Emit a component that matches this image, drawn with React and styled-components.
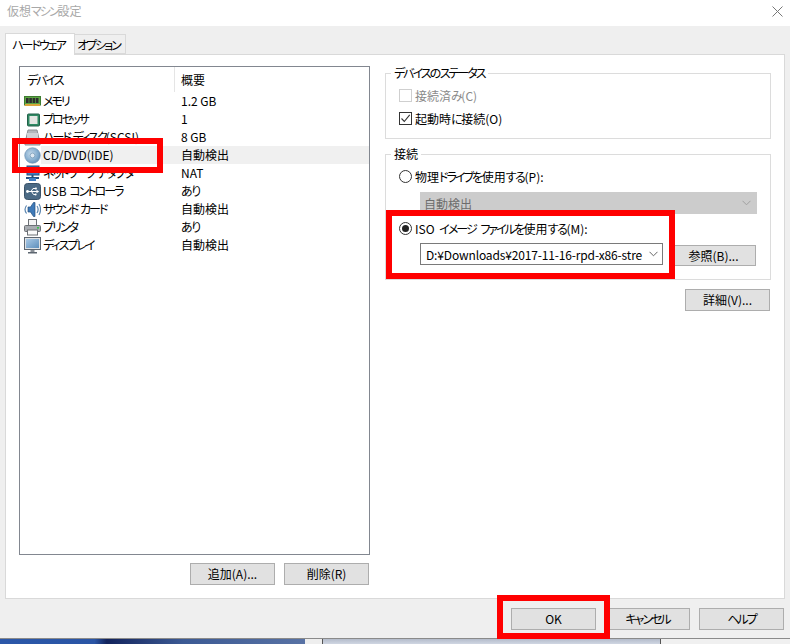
import React from "react";
import styled, { createGlobalStyle } from "styled-components";

const Global = createGlobalStyle`
  html, body { margin: 0; padding: 0; background: #efefef; }
  body {
    font-family: "Noto Sans CJK JP", "Noto Sans", sans-serif;
    font-size: 12px;
    color: #000;
    font-feature-settings: "palt";
  }
  * { box-sizing: border-box; }
`;

const Page = styled.div`
  position: relative;
  width: 790px;
  height: 644px;
  overflow: hidden;
  display: flex;
  flex-direction: column;
  background: #efefef;
`;
const Katakana = styled.span`
  letter-spacing: -2px;
`;
const Hiragana = styled.span`
  letter-spacing: -1.4px;
`;
const Jp = ({ children }) =>
  children.split(/([\u30A0-\u30FF]+|[\u3040-\u309F]+)/).map((part, i) => {
    if (/^[\u30A0-\u30FF]+$/.test(part)) return <Katakana key={i}>{part}</Katakana>;
    if (/^[\u3040-\u309F]+$/.test(part)) return <Hiragana key={i}>{part}</Hiragana>;
    return part;
  });

const TitleBar = styled.header`
  height: 26px;
  flex: none;
  background: #fff;
  display: flex;
  align-items: center;
  justify-content: space-between;
  padding: 0 7px 4px 7px;
  color: #a8a8a8;
  line-height: 20px;
`;
const CloseGlyph = styled.svg`
  width: 11px;
  height: 11px;
  margin-top: 1px;
`;
const TabStrip = styled.nav`
  height: 28px;
  flex: none;
  padding: 7px 0 0 5px;
  display: flex;
  align-items: flex-end;
  position: relative;
  z-index: 1;
`;
const Tab = styled.div`
  display: flex;
  align-items: center;
  justify-content: center;
  white-space: nowrap;
  padding-right: 3px;
  border: 1px solid #d9d9d9;
  background: ${(p) => (p.$active ? "#fff" : "#efefef")};
  width: ${(p) => (p.$active ? "70px" : "51px")};
  height: ${(p) => (p.$active ? "22px" : "20px")};
  margin-bottom: ${(p) => (p.$active ? "-1px" : "0")};
  border-bottom: ${(p) => (p.$active ? "none" : "1px solid #d9d9d9")};
  border-left: ${(p) => (p.$active ? "1px solid #d9d9d9" : "none")};
`;
const Panel = styled.main`
  margin: 0 5px;
  height: 545px;
  flex: none;
  background: #fff;
  border: 1px solid #d9d9d9;
  padding: 11px 13px 0 13px;
  display: flex;
  gap: 15px;
`;
const LeftColumn = styled.section`
  width: 351px;
  flex: none;
  display: flex;
  flex-direction: column;
`;
const ListBox = styled.div`
  height: 489px;
  border: 1px solid #828790;
  background: #fff;
`;
const ListHeader = styled.div`
  height: 25px;
  display: flex;
  line-height: 26px;
`;
const HeaderCell = styled.div`
  padding-left: ${(p) => p.$pad}px;
  width: ${(p) => (p.$w ? `${p.$w}px` : "auto")};
  border-right: ${(p) => (p.$w ? "1px solid #e5e5e5" : "none")};
`;
const Row = styled.div`
  height: 18px;
  display: flex;
  align-items: center;
  padding-left: 4px;
  line-height: 18px;
`;
const RowIcon = styled.svg`
  width: 17px;
  height: 17px;
  flex: none;
`;
const RowBody = styled.div`
  flex: 1;
  height: 18px;
  display: flex;
  background: ${(p) => (p.$selected ? "#f0f0f0" : "transparent")};
`;
const RowName = styled.div`
  width: 134px;
  padding-left: 2px;
  white-space: nowrap;
`;
const RowSummary = styled.div`
  padding-left: 6px;
`;
const ActionsRow = styled.div`
  display: flex;
  justify-content: flex-end;
  gap: 9px;
  margin-top: 8px;
  padding-right: 1px;
`;
const Button = styled.button`
  width: 85px;
  height: 22px;
  padding: 0;
  border: 1px solid #adadad;
  background: #e1e1e1;
  font: inherit;
  font-feature-settings: inherit;
  color: #000;
  line-height: 18px;
  flex: none;
`;
const RightColumn = styled.section`
  width: 386px;
  flex: none;
  display: flex;
  flex-direction: column;
`;
const Group = styled.fieldset`
  margin: 0 0 ${(p) => p.$after}px 0;
  padding: ${(p) => p.$top}px 0 0 13px;
  height: ${(p) => p.$h}px;
  border: 1px solid #dcdcdc;
  min-width: 0;
`;
const Legend = styled.legend`
  padding: 0 3px;
  margin-left: -8px;
  line-height: 14px;
  height: 14px;
`;
const CheckRow = styled.label`
  height: 23px;
  display: flex;
  align-items: center;
  gap: 3px;
  color: ${(p) => (p.$disabled ? "#8a8a8a" : "#000")};
`;
const CheckBox = styled.span`
  width: 13px;
  height: 13px;
  border: 1px solid ${(p) => (p.$disabled ? "#cfcfcf" : "#333")};
  background: #fff;
  display: flex;
  align-items: center;
  justify-content: center;
`;
const RadioRow = styled.label`
  height: 20px;
  display: flex;
  align-items: center;
  gap: 3px;
  margin-top: ${(p) => p.$mt}px;
  white-space: pre;
  word-spacing: 2px;
`;
const Radio = styled.span`
  width: 13px;
  height: 13px;
  border-radius: 50%;
  border: 1px solid #333;
  background: #fff;
  display: flex;
  align-items: center;
  justify-content: center;
  &::after {
    content: "";
    display: ${(p) => (p.$on ? "block" : "none")};
    width: 7px;
    height: 7px;
    border-radius: 50%;
    background: #222;
  }
`;
const DisabledSelect = styled.div`
  width: 337px;
  height: 22px;
  margin: 6px 0 0 21px;
  background: #cccccc;
  color: #6d6d6d;
  display: flex;
  align-items: center;
  justify-content: space-between;
  padding: 0 6px 0 4px;
`;
const ComboLine = styled.div`
  display: flex;
  margin: 5px 0 0 21px;
  gap: 8px;
  align-items: flex-start;
`;
const Combo = styled.div`
  width: 243px;
  height: 22px;
  border: 1px solid #7a7a7a;
  background: #fff;
  display: flex;
  align-items: center;
  justify-content: space-between;
  padding: 0 4px 0 5px;
  white-space: nowrap;
  letter-spacing: -0.15px;
`;
const BrowseButton = styled(Button)`
  margin-top: 2px;
  height: 21px;
`;
const DetailButton = styled(Button)`
  align-self: flex-end;
  margin-right: 1px;
`;
const Footer = styled.footer`
  height: 39px;
  flex: none;
  display: flex;
  justify-content: flex-end;
  gap: 9px;
  padding: 9px 6px 0 0;
`;
const DesktopStrip = styled.div`
  flex: 1;
  display: flex;
  border-top: 1px solid #8a8a8a;
`;
const Wallpaper = styled.div`
  width: 305px;
  background: linear-gradient(90deg, #2b57a8 0%, #2a55a5 31%, #12235c 35%, #3c5a94 60%, #5872a4 100%);
`;
const TaskGap = styled.div`
  width: 18px;
  background: #eeeeee;
  border-right: 1px solid #555;
`;
const TaskWindow = styled.div`
  width: 338px;
  background: linear-gradient(180deg, #b4bccb, #d0d6e2);
  border-right: 1px solid #555;
`;
const TaskRest = styled.div`
  flex: 1;
  background: #f0f0f0;
`;
const Highlight = styled.div`
  position: absolute;
  left: ${(p) => p.$x}px;
  top: ${(p) => p.$y}px;
  width: ${(p) => p.$w}px;
  height: ${(p) => p.$h}px;
  border: 6px solid #ff0000;
  pointer-events: none;
`;

const Chevron = ({ color = "#666" }) => (
  <svg width="9" height="6" viewBox="0 0 9 6" fill="none">
    <path d="M.5 .8 4.5 4.8 8.5 .8" stroke={color} strokeWidth="1" />
  </svg>
);

const RamIcon = () => (
  <RowIcon viewBox="0 0 17 17">
    <rect x="0.5" y="3.5" width="16" height="8.5" fill="#5da544" stroke="#3e7d30" />
    <rect x="2" y="5" width="2.6" height="5" fill="#2e2e2e" />
    <rect x="5.3" y="5" width="2.6" height="5" fill="#2e2e2e" />
    <rect x="8.6" y="5" width="2.6" height="5" fill="#2e2e2e" />
    <rect x="11.9" y="5" width="2.6" height="5" fill="#2e2e2e" />
    <rect x="1" y="11" width="15" height="2" fill="#d8a63a" />
  </RowIcon>
);
const CpuIcon = () => (
  <RowIcon viewBox="0 0 17 17">
    <rect x="3.5" y="3" width="12" height="12" rx="1" fill="#2f8a63" stroke="#24604a" />
    <rect x="5.5" y="5" width="8" height="8" fill="#e4e6e2" />
  </RowIcon>
);
const HddIcon = () => (
  <RowIcon viewBox="0 0 17 17">
    <path d="M4 1h9l3 13v2H1v-2z" fill="#b4b8bd" stroke="#8b8f94" />
    <rect x="3" y="4" width="11" height="7" fill="#cfd2d6" />
  </RowIcon>
);
const CdIcon = () => (
  <RowIcon viewBox="0 0 17 17">
    <defs>
      <radialGradient id="cdg" cx="0.4" cy="0.4" r="0.7">
        <stop offset="0" stopColor="#c4d9ea" />
        <stop offset="0.6" stopColor="#86aecf" />
        <stop offset="1" stopColor="#5a88b2" />
      </radialGradient>
    </defs>
    <circle cx="8.5" cy="8.5" r="7.8" fill="url(#cdg)" stroke="#6b8fae" strokeWidth=".6" />
    <circle cx="8.5" cy="8.5" r="2.4" fill="#dfe9f2" stroke="#6f93b1" strokeWidth=".7" />
  </RowIcon>
);
const NetIcon = () => (
  <RowIcon viewBox="0 0 17 17">
    <rect x="3" y="1" width="12" height="9" fill="#3f7fc4" stroke="#25507f" />
    <path d="M2 13h13M8.5 10v3" stroke="#25507f" strokeWidth="2" />
    <rect x="5" y="13" width="7" height="3" fill="#3f7fc4" />
  </RowIcon>
);
const UsbIcon = () => (
  <RowIcon viewBox="0 0 17 17">
    <rect x="0.5" y="0.5" width="16" height="16" rx="3" fill="#4b6a85" stroke="#3a5268" />
    <path d="M2.8 8.5h11M7 8.5 9 5.5h2.2M7.5 8.5l2 3h1.7" stroke="#fff" strokeWidth="1" fill="none" />
    <circle cx="3.5" cy="8.5" r="1.4" fill="#fff" />
    <path d="M12.5 6.8v3.4l2.6-1.7z" fill="#fff" />
    <rect x="11" y="4.6" width="1.8" height="1.8" fill="#fff" />
    <circle cx="11.6" cy="11.5" r="1" fill="#fff" />
  </RowIcon>
);
const SoundIcon = () => (
  <RowIcon viewBox="0 0 17 17">
    <path d="M4 6H6.5L9.5 1.5H11v14H9.5L6.5 11H4z" fill="#3f7ab8" stroke="#27517f" strokeWidth=".7" />
    <path d="M13 5c1.3 2 1.3 5 0 7M15 3c2 3 2 8 0 11" fill="none" stroke="#5b86b0" strokeWidth="1.2" />
    <path d="M2.6 4.5c-2 2.5-2 5.5 0 8" fill="none" stroke="#5b86b0" strokeWidth="1.2" />
  </RowIcon>
);
const PrinterIcon = () => (
  <RowIcon viewBox="0 0 17 17">
    <rect x="4.5" y="0.5" width="8" height="6" fill="#f4f4f4" stroke="#6c7075" />
    <rect x="0.5" y="6.5" width="16" height="6" rx="1" fill="#a8acb1" stroke="#6c7075" />
    <rect x="3.5" y="11" width="10" height="5" fill="#fafafa" stroke="#6c7075" />
    <rect x="13" y="8" width="2" height="1.6" fill="#38c04a" />
  </RowIcon>
);
const MonitorIcon = () => (
  <RowIcon viewBox="0 0 17 17">
    <defs>
      <linearGradient id="mong" x1="0" y1="0" x2="1" y2="1">
        <stop offset="0" stopColor="#a9c9e6" />
        <stop offset="1" stopColor="#5e8fbc" />
      </linearGradient>
    </defs>
    <rect x="0.5" y="0.5" width="16" height="12" fill="#dfe2e5" stroke="#5d6670" />
    <rect x="2" y="2" width="13" height="9" fill="url(#mong)" />
    <rect x="6.5" y="13" width="4" height="2" fill="#8a9097" />
    <rect x="4" y="15" width="9" height="1.5" fill="#5d6670" />
  </RowIcon>
);

const devices = [
  { Icon: RamIcon, name: "メモリ", summary: "1.2 GB" },
  { Icon: CpuIcon, name: "プロセッサ", summary: "1" },
  { Icon: HddIcon, name: "ハード ディスク(SCSI)", summary: "8 GB" },
  { Icon: CdIcon, name: "CD/DVD(IDE)", summary: "自動検出", selected: true },
  { Icon: NetIcon, name: "ネットワーク アダプタ", summary: "NAT" },
  { Icon: UsbIcon, name: "USB コントローラ", summary: "あり" },
  { Icon: SoundIcon, name: "サウンド カード", summary: "自動検出" },
  { Icon: PrinterIcon, name: "プリンタ", summary: "あり" },
  { Icon: MonitorIcon, name: "ディスプレイ", summary: "自動検出" },
];

export default function App() {
  return (
    <Page>
      <Global />
      <TitleBar>
        <span><Jp>仮想マシン設定</Jp></span>
        <CloseGlyph viewBox="0 0 11 11">
          <path d="M.5 .5 10.5 10.5M10.5 .5 .5 10.5" stroke="#777" strokeWidth="1" fill="none" />
        </CloseGlyph>
      </TitleBar>
      <TabStrip>
        <Tab $active><Jp>ハードウェア</Jp></Tab>
        <Tab><Jp>オプション</Jp></Tab>
      </TabStrip>
      <Panel>
        <LeftColumn>
          <ListBox>
            <ListHeader>
              <HeaderCell $w={155} $pad={7}><Jp>デバイス</Jp></HeaderCell>
              <HeaderCell $pad={6}>概要</HeaderCell>
            </ListHeader>
            {devices.map(({ Icon, name, summary, selected }) => (
              <Row key={name}>
                <Icon />
                <RowBody $selected={selected}>
                  <RowName><Jp>{name}</Jp></RowName>
                  <RowSummary><Jp>{summary}</Jp></RowSummary>
                </RowBody>
              </Row>
            ))}
          </ListBox>
          <ActionsRow>
            <Button>追加(A)...</Button>
            <Button>削除(R)</Button>
          </ActionsRow>
        </LeftColumn>
        <RightColumn>
          <Group $h={73} $after={8} $top={4}>
            <Legend><Jp>デバイスのステータス</Jp></Legend>
            <CheckRow $disabled>
              <CheckBox $disabled />
              <span><Jp>接続済み(C)</Jp></span>
            </CheckRow>
            <CheckRow>
              <CheckBox>
                <svg width="11" height="11" viewBox="0 0 11 11" fill="none">
                  <path d="M1.5 5.5 4.3 8.5 9.7 1.8" stroke="#333" strokeWidth="1.1" />
                </svg>
              </CheckBox>
              <span><Jp>起動時に接続(O)</Jp></span>
            </CheckRow>
          </Group>
          <Group $h={133} $after={9} $top={5}>
            <Legend>接続</Legend>
            <RadioRow $mt={0}>
              <Radio />
              <span><Jp>物理ドライブを使用する(P):</Jp></span>
            </RadioRow>
            <DisabledSelect>
              自動検出
              <Chevron color="#a0a0a0" />
            </DisabledSelect>
            <RadioRow $mt={4}>
              <Radio $on />
              <span><Jp>ISO イメージ ファイルを使用する(M):</Jp></span>
            </RadioRow>
            <ComboLine>
              <Combo>
                <span>D:¥Downloads¥2017-11-16-rpd-x86-stre</span>
                <Chevron />
              </Combo>
              <BrowseButton>参照(B)...</BrowseButton>
            </ComboLine>
          </Group>
          <DetailButton>詳細(V)...</DetailButton>
        </RightColumn>
      </Panel>
      <Footer>
        <Button>OK</Button>
        <Button><Jp>キャンセル</Jp></Button>
        <Button><Jp>ヘルプ</Jp></Button>
      </Footer>
      <DesktopStrip>
        <Wallpaper />
        <TaskGap />
        <TaskWindow />
        <TaskRest />
      </DesktopStrip>
      <Highlight $x={12} $y={138} $w={151} $h={35} />
      <Highlight $x={386} $y={210} $w={289} $h={69} />
      <Highlight $x={497} $y={595} $w={113} $h={44} />
    </Page>
  );
}
